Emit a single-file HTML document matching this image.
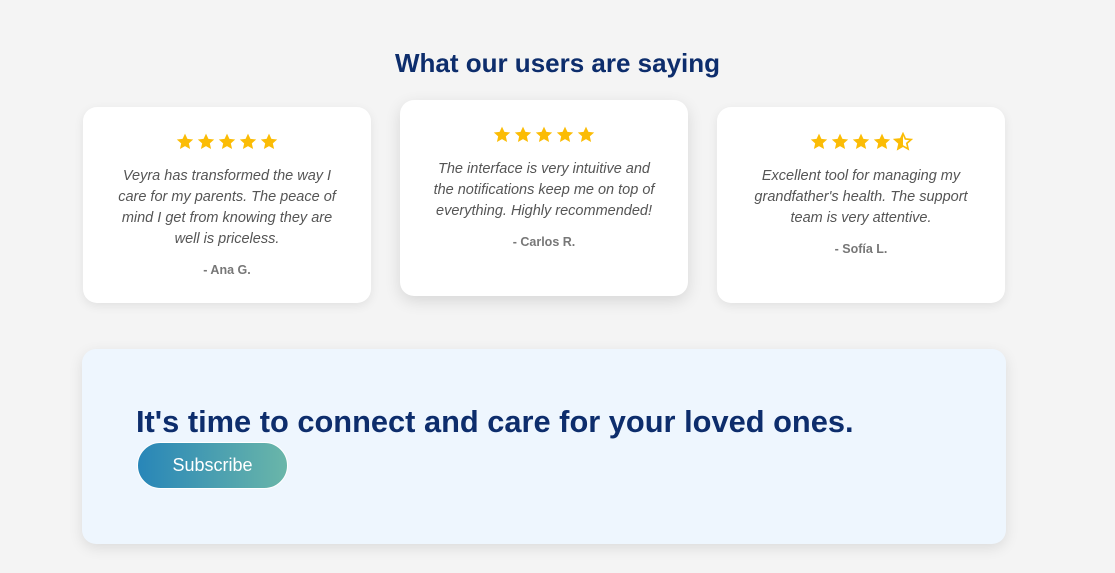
<!DOCTYPE html>
<html><head><meta charset="utf-8"><style>
*{margin:0;padding:0;box-sizing:border-box}
body{width:1115px;height:573px;background:#f4f4f4;font-family:"Liberation Sans",sans-serif;position:relative;overflow:hidden}
h2{position:absolute;top:48px;left:0;width:1115px;text-align:center;font-size:26px;font-weight:bold;color:#0d2d6c}
.card{position:absolute;width:288px;height:196px;background:#fff;border-radius:14px;box-shadow:0 3px 10px rgba(0,0,0,.08);text-align:center}
.stars{margin-top:25px;height:22px;display:flex;justify-content:center;gap:1px}
.stars svg{width:20px;height:20px}
.q{font-style:italic;font-size:14.5px;line-height:21px;color:#555;margin:12px 30px 0}
.a{font-weight:bold;font-size:12.5px;color:#777;margin-top:13px}
.cta{position:absolute;left:82px;top:349px;width:924px;height:195px;background:#eef6fe;border-radius:14px;box-shadow:0 4px 14px rgba(0,0,0,.1)}
.cta h3{position:absolute;left:54px;top:55px;font-size:30.8px;font-weight:bold;color:#0d2d6c;white-space:nowrap}
.btn{position:absolute;left:55px;top:93px;width:151px;height:47px;border-radius:24px;background:linear-gradient(90deg,#2886b8,#6ab6a9);color:#fff;font-size:18px;line-height:45px;text-align:center;border:1px solid #fff}
</style></head><body>
<svg width="0" height="0" style="position:absolute"><defs>
<path id="s" d="M12 2l2.9 6.3 6.9.7-5.2 4.6 1.5 6.8L12 16.9 5.9 20.4l1.5-6.8L2.2 9l6.9-.7z"/>
</defs></svg>
<h2>What our users are saying</h2>
<div class="card" style="left:83px;top:107px">
<div class="stars"><svg viewBox="0 0 24 24"><use href="#s" fill="#fbbc05"/></svg><svg viewBox="0 0 24 24"><use href="#s" fill="#fbbc05"/></svg><svg viewBox="0 0 24 24"><use href="#s" fill="#fbbc05"/></svg><svg viewBox="0 0 24 24"><use href="#s" fill="#fbbc05"/></svg><svg viewBox="0 0 24 24"><use href="#s" fill="#fbbc05"/></svg></div>
<p class="q">Veyra has transformed the way I care for my parents. The peace of mind I get from knowing they are well is priceless.</p>
<p class="a">- Ana G.</p></div>
<div class="card" style="left:400px;top:100px;box-shadow:0 5px 16px rgba(0,0,0,.12)">
<div class="stars"><svg viewBox="0 0 24 24"><use href="#s" fill="#fbbc05"/></svg><svg viewBox="0 0 24 24"><use href="#s" fill="#fbbc05"/></svg><svg viewBox="0 0 24 24"><use href="#s" fill="#fbbc05"/></svg><svg viewBox="0 0 24 24"><use href="#s" fill="#fbbc05"/></svg><svg viewBox="0 0 24 24"><use href="#s" fill="#fbbc05"/></svg></div>
<p class="q">The interface is very intuitive and the notifications keep me on top of everything. Highly recommended!</p>
<p class="a">- Carlos R.</p></div>
<div class="card" style="left:717px;top:107px">
<div class="stars"><svg viewBox="0 0 24 24"><use href="#s" fill="#fbbc05"/></svg><svg viewBox="0 0 24 24"><use href="#s" fill="#fbbc05"/></svg><svg viewBox="0 0 24 24"><use href="#s" fill="#fbbc05"/></svg><svg viewBox="0 0 24 24"><use href="#s" fill="#fbbc05"/></svg><svg viewBox="0 0 24 24"><defs><clipPath id="h"><rect x="0" y="0" width="12" height="24"/></clipPath></defs><use href="#s" fill="none" stroke="#fbbc05" stroke-width="2"/><use href="#s" fill="#fbbc05" clip-path="url(#h)"/></svg></div>
<p class="q">Excellent tool for managing my grandfather's health. The support team is very attentive.</p>
<p class="a">- Sofía L.</p></div>
<div class="cta"><h3>It's time to connect and care for your loved ones.</h3><div class="btn">Subscribe</div></div>
</body></html>
